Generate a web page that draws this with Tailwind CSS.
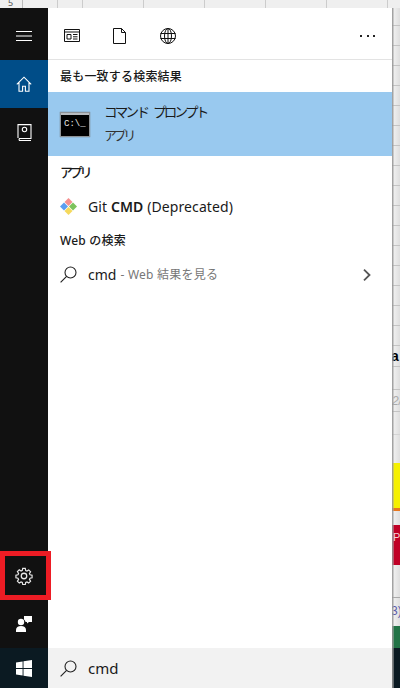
<!DOCTYPE html>
<html lang="ja">
<head>
<meta charset="utf-8">
<script src="https://cdn.jsdelivr.net/npm/@tailwindcss/browser@4"></script>
</head>
<body class="m-0">
<div class="relative flex flex-col w-[400px] h-[688px] overflow-hidden bg-[#f1f1f1] font-['Noto_Sans','Noto_Sans_CJK_JP',sans-serif]">
  <!-- spreadsheet strip on top -->
  <div class="h-2 shrink-0 flex bg-[#efefef] text-[9px] leading-[6px] text-[#555]">
    <div class="w-[23px] border-r border-[#bbb] pl-2 overflow-hidden">5</div>
    <div class="w-[35px] border-r border-[#ccc]"></div>
    <div class="w-[25px] border-r border-[#ccc]"></div>
    <div class="w-[61px] border-r border-[#ccc]"></div>
    <div class="w-[61px] border-r border-[#ccc]"></div>
    <div class="w-[61px] border-r border-[#ccc]"></div>
    <div class="w-[61px] border-r border-[#ccc]"></div>
    <div class="w-[61px] border-r border-[#ccc]"></div>
  </div>
  <div class="flex flex-1 min-h-0">
    <!-- start panel -->
    <div class="w-[392px] flex shrink-0 bg-white">
      <!-- sidebar -->
      <div class="relative w-12 shrink-0 flex flex-col bg-[#111111]">
        <div class="h-[52px] flex items-center justify-center pt-[4px]">
          <svg width="16" height="10" viewBox="0 0 16 10" stroke="#fff" stroke-width="1"><path d="M0 .5h16M0 5h16M0 9.5h16"/></svg>
        </div>
        <div class="h-12 flex items-center justify-center bg-[#004d88]">
          <svg width="16" height="16" viewBox="0 0 16 16" fill="none" stroke="#fff" stroke-width="1.1"><path d="M.8 8.3 8 1.2l7.2 7.1M3 6.5v8.7h3.6v-5h2.8v5H13V6.5"/></svg>
        </div>
        <div class="h-12 flex items-center justify-center">
          <svg width="15" height="17" viewBox="0 0 15 17" fill="none" stroke="#fff" stroke-width="1.1"><path d="M1 14V.6h13v13.9H2.5a1.4 1.4 0 0 0 0 2H14"/><circle cx="7.5" cy="5.5" r="2.2"/></svg>
        </div>
        <div class="flex-1"></div>
        <div class="h-12 flex items-center justify-center">
          <svg width="18" height="18" viewBox="0 0 17 17" fill="none" stroke="#e8e8e8" stroke-width="1.2"><circle cx="8.5" cy="8.5" r="2.6"/><path d="M7.2.8h2.6l.4 2.1 1.3.6 1.8-1.2 1.9 1.9-1.2 1.8.6 1.3 2.1.4v2.6l-2.1.4-.6 1.3 1.2 1.8-1.9 1.9-1.8-1.2-1.3.6-.4 2.1H7.2l-.4-2.1-1.3-.6-1.8 1.2-1.9-1.9 1.2-1.8-.6-1.3-2.1-.4V7.6l2.1-.4.6-1.3L1.8 4.1l1.9-1.9 1.8 1.2 1.3-.6z" transform="translate(.6 .6) scale(.93)"/></svg>
        </div>
        <div class="h-12 flex items-center justify-center">
          <svg width="16" height="16" viewBox="0 0 16 16" fill="#fff"><path d="M8 0h8v6h-3l-2 1.6V6H9.6A4 4 0 0 0 8 3.4z"/><circle cx="5" cy="6" r="3.2"/><path d="M0 16v-2.2C0 11.3 2 10 5 10s5 1.3 5 3.8V16z"/></svg>
        </div>
        <div class="h-10 flex items-center justify-center bg-[#0b1a22]">
          <svg width="16" height="17" viewBox="0 0 16 17" fill="#fff"><path d="M0 2.4 6.6 1.5v6.4H0zM7.5 1.3 16 0v7.9H7.5zM0 8.9h6.6v6.5L0 14.5zM7.5 8.9H16V17l-8.5-1.3z"/></svg>
        </div>
        <!-- red annotation -->
        <div class="absolute left-0 top-[543px] w-[51px] h-[49px] border-[5px] border-[#ed1c24]"></div>
      </div>
      <!-- main -->
      <div class="flex-1 min-w-0 flex flex-col text-[#1a1a1a]">
        <div class="h-[52px] shrink-0 flex items-center pt-[4px] pl-4 pr-[17px] border-b border-[#e3e3e3]">
          <svg class="mr-[33px]" width="16" height="13" viewBox="0 0 16 13" fill="none" stroke="#111" stroke-width="1"><path d="M.5.5h15v12H.5zM.5 3h15M3 5.5h4v4.5H3zM9 5.5h4.5M9 7.8h4.5M9 10h4.5"/></svg>
          <svg class="mr-[34px]" width="13" height="16" viewBox="0 0 13 16" fill="none" stroke="#111" stroke-width="1"><path d="M.5.5h8l4 4v11H.5zM8.5.5v4h4"/></svg>
          <svg width="16" height="16" viewBox="0 0 16 16" fill="none" stroke="#111" stroke-width="1"><circle cx="8" cy="8" r="7.5"/><ellipse cx="8" cy="8" rx="3.5" ry="7.5"/><path d="M.5 5.5h15M.5 10.5h15M8 .5v15"/></svg>
          <div class="flex-1"></div>
          <div class="flex gap-[4.5px]">
            <div class="w-[2px] h-[2px] bg-[#222]"></div>
            <div class="w-[2px] h-[2px] bg-[#222]"></div>
            <div class="w-[2px] h-[2px] bg-[#222]"></div>
          </div>
        </div>
        <div class="h-8 shrink-0 flex items-center pl-3 pt-[2px] text-[12px] font-medium tracking-[0.2px]">最も一致する検索結果</div>
        <div class="h-16 shrink-0 flex items-center pl-3 bg-[#99c9ef]">
          <div class="w-[30px] h-[25px] mr-[14px] flex flex-col bg-[#8d9296] p-[1px] shadow-[0_0_1px_#666]">
            <div class="h-[2px] bg-[#b8bcc0]"></div>
            <div class="flex-1 bg-black flex items-center pl-[3px] pb-[2px] overflow-hidden text-[#e8e8e8] font-['Liberation_Mono',monospace] text-[9px] leading-none whitespace-nowrap">C:\_</div>
          </div>
          <div class="flex flex-col">
            <div class="text-[13.5px] leading-[20px] mb-[5px] -mt-[2px] -tracking-[2.7px] [word-spacing:5px] whitespace-nowrap">コマンド プロンプト</div>
            <div class="text-[13px] leading-[17px] text-[#333] -tracking-[3.4px]">アプリ</div>
          </div>
        </div>
        <div class="h-8 shrink-0 flex items-center pl-3 pt-[2px] text-[13px] font-medium -tracking-[3.2px]">アプリ</div>
        <div class="h-9 shrink-0 flex items-center pl-3 text-[14px] tracking-[0.1px]">
          <svg class="mr-[11px]" width="17" height="17" viewBox="0 0 17 17">
            <path d="M8.5 0 12.5 4 8.5 8 4.5 4z" fill="#f58f8f"/>
            <path d="M13 4.5 17 8.5 13 12.5 9 8.5z" fill="#7cc25c"/>
            <path d="M8.5 9 12.5 13 8.5 17 4.5 13z" fill="#f5d95c"/>
            <path d="M4 4.5 8 8.5 4 12.5 0 8.5z" fill="#5b9df0"/>
          </svg>
          <span>Git <span class="font-semibold">CMD</span> (Deprecated)</span>
        </div>
        <div class="h-8 shrink-0 flex items-center pl-3 pt-[2px] text-[12px] font-medium tracking-[0.2px]">Web の検索</div>
        <div class="h-9 shrink-0 flex items-center pl-3 pr-[21px] pt-[1px]">
          <svg class="mr-[11px]" width="17" height="17" viewBox="0 0 17 17" fill="none" stroke="#222" stroke-width="1.1"><circle cx="10.5" cy="6.5" r="5.5"/><path d="M6.6 10.4.6 16.4"/></svg>
          <span class="text-[14px]">cmd</span>
          <span class="text-[12px] text-[#777] ml-[4px] tracking-[0.25px] whitespace-nowrap">- Web 結果を見る</span>
          <div class="flex-1"></div>
          <svg width="8" height="12" viewBox="0 0 8 12" fill="none" stroke="#555" stroke-width="1.8"><path d="M1 .7 6.5 6 1 11.3"/></svg>
        </div>
        <div class="flex-1"></div>
        <div class="h-10 shrink-0 flex items-center pl-3 bg-[#f2f2f2]">
          <svg class="mr-[11px]" width="17" height="17" viewBox="0 0 17 17" fill="none" stroke="#222" stroke-width="1.1"><circle cx="10.5" cy="6.5" r="5.5"/><path d="M6.6 10.4.6 16.4"/></svg>
          <span class="text-[15px]">cmd</span>
        </div>
      </div>
    </div>
    <!-- sliver of the spreadsheet on the right -->
    <div class="relative flex-1 min-w-0 overflow-hidden flex flex-col bg-gradient-to-r from-[#f4f4f4] to-[#dedede]">
      <div class="h-[18px] shrink-0 border-b border-[#c4c4c4]"></div>
      <div class="h-5 shrink-0 border-b border-[#c4c4c4]"></div>
      <div class="h-5 shrink-0 border-b border-[#c4c4c4]"></div>
      <div class="h-5 shrink-0 border-b border-[#c4c4c4]"></div>
      <div class="h-5 shrink-0 border-b border-[#c4c4c4]"></div>
      <div class="h-5 shrink-0 border-b border-[#c4c4c4]"></div>
      <div class="h-5 shrink-0 border-b border-[#c4c4c4]"></div>
      <div class="h-5 shrink-0 border-b border-[#c4c4c4]"></div>
      <div class="h-5 shrink-0 border-b border-[#c4c4c4]"></div>
      <div class="h-5 shrink-0 border-b border-[#c4c4c4]"></div>
      <div class="h-5 shrink-0 border-b border-[#c4c4c4]"></div>
      <div class="h-5 shrink-0 border-b border-[#c4c4c4]"></div>
      <div class="h-5 shrink-0 border-b border-[#c4c4c4]"></div>
      <div class="h-5 shrink-0 border-b border-[#c4c4c4]"></div>
      <div class="h-5 shrink-0 border-b border-[#c4c4c4]"></div>
      <div class="h-5 shrink-0 border-b border-[#c4c4c4]"></div>
      <div class="h-5 shrink-0 border-b border-[#c4c4c4]"></div>
      <div class="h-[21px] shrink-0 border-b border-[#c4c4c4] text-[14px] leading-[21px] font-['Liberation_Sans',sans-serif] font-bold text-black -ml-[1px]">a</div>
      <div class="h-[23px] shrink-0 border-b border-[#c4c4c4]"></div>
      <div class="h-[22px] shrink-0 border-b border-[#c4c4c4] text-[12px] leading-[22px] text-[#aaa] italic font-['Liberation_Sans',sans-serif]">2/</div>
      <div class="h-[23px] shrink-0 border-b border-[#d4d4d4]"></div>
      <div class="h-7 shrink-0"></div>
      <div class="h-[45px] shrink-0 bg-[#f5f000]"></div>
      <div class="h-[3px] shrink-0 bg-[#e8771f]"></div>
      <div class="h-[14px] shrink-0"></div>
      <div class="h-10 shrink-0 bg-[#c00026] text-[#f4d0d8] text-[11px] leading-[24px] font-['Liberation_Sans',sans-serif] pl-[1px]">P</div>
      <div class="h-[33px] shrink-0 border-b border-[#aaa]"></div>
      <div class="h-7 shrink-0 text-[12px] leading-[26px] text-[#5a5aa8] font-['Liberation_Sans',sans-serif] -ml-[1px]">3)</div>
      <div class="h-[22px] shrink-0 bg-[#217346]"></div>
      <div class="flex-1 bg-[#0b1a22]"></div>
      <!-- panel's cast shadow -->
      <div class="absolute inset-y-0 left-0 w-[2px] bg-gradient-to-r from-[#8f8f8f] to-[#bdbdbd]/40 pointer-events-none"></div>
    </div>
  </div>
</div>
</body>
</html>
